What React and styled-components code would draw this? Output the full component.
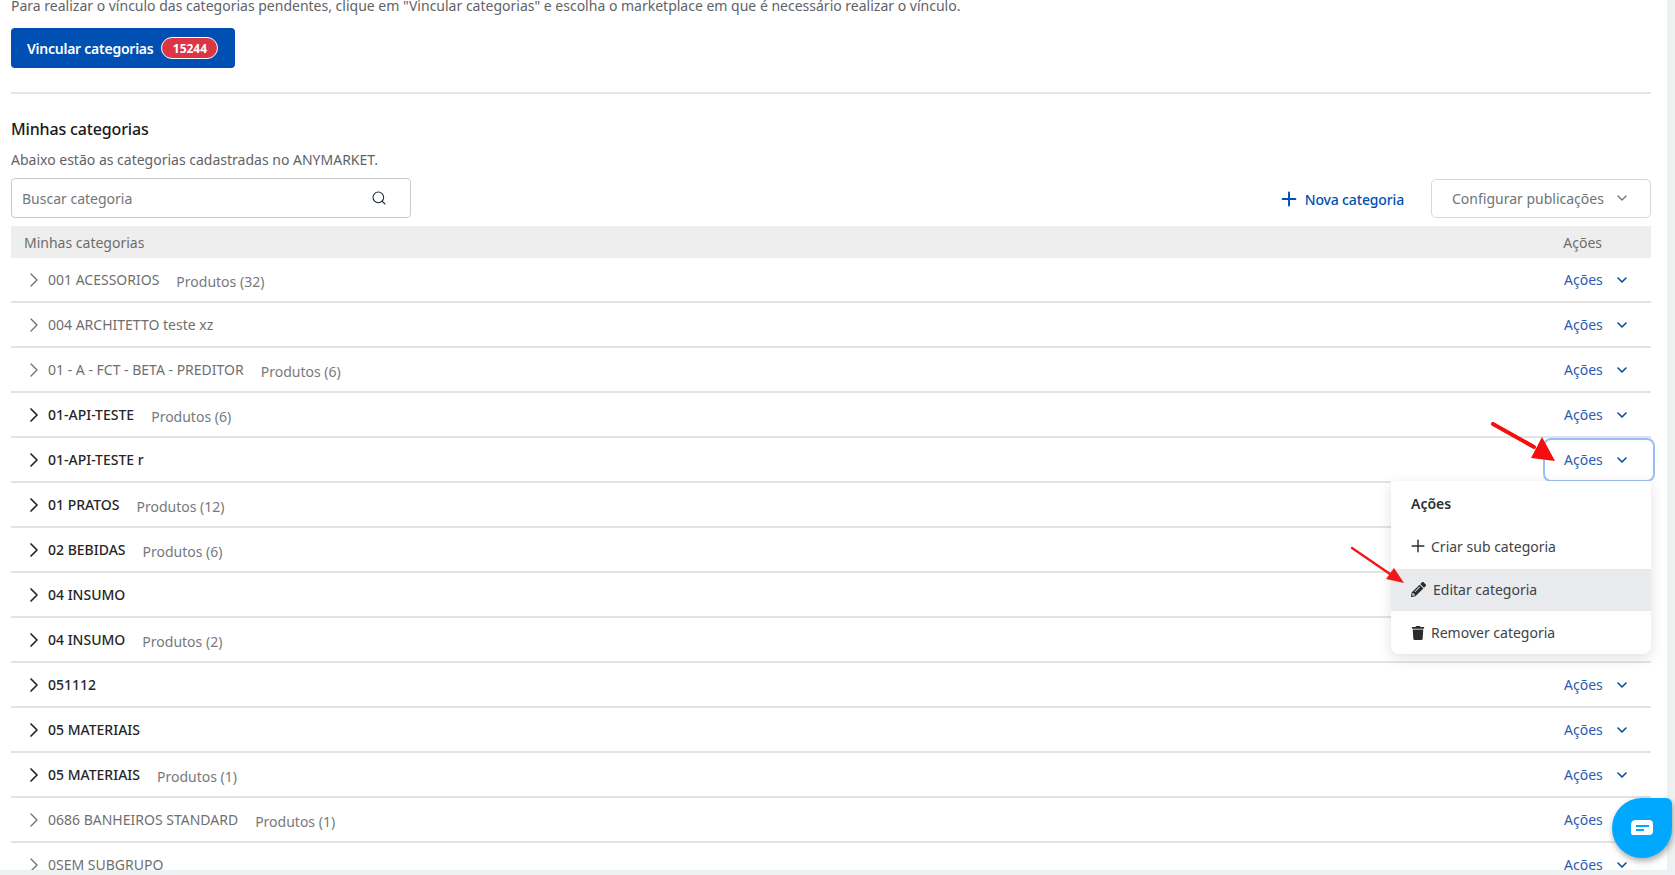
import React from 'react';
import styled, { createGlobalStyle } from 'styled-components';
import { ChevronDown, ChevronRight, Plus, Search } from 'lucide-react';
import { FaPencilAlt, FaTrash } from 'react-icons/fa';

const CATEGORIES = [
  { name: '001 ACESSORIOS', count: 32, muted: true },
  { name: '004 ARCHITETTO teste xz', muted: true },
  { name: '01 - A - FCT - BETA - PREDITOR', count: 6, muted: true },
  { name: '01-API-TESTE', count: 6 },
  { name: '01-API-TESTE r', focused: true },
  { name: '01 PRATOS', count: 12 },
  { name: '02 BEBIDAS', count: 6 },
  { name: '04 INSUMO' },
  { name: '04 INSUMO', count: 2 },
  { name: '051112' },
  { name: '05 MATERIAIS' },
  { name: '05 MATERIAIS', count: 1 },
  { name: '0686 BANHEIROS STANDARD', count: 1, muted: true },
  { name: '0SEM SUBGRUPO', muted: true },
];

const App = () => {
  return (
    <Viewport>
      <GlobalStyle />
      <Page>
        <Intro>
          Para realizar o vínculo das categorias pendentes, clique em "Vincular categorias" e escolha o marketplace em que é necessário realizar o vínculo.
        </Intro>
        <LinkButton>
          Vincular categorias
          <Badge>15244</Badge>
        </LinkButton>
        <Divider />
        <Heading>Minhas categorias</Heading>
        <Subtitle>Abaixo estão as categorias cadastradas no ANYMARKET.</Subtitle>
        <Toolbar>
          <SearchBox>
            <SearchText>Buscar categoria</SearchText>
            <Search size={16} strokeWidth={1.6} color="#1f2933" />
          </SearchBox>
          <ToolbarActions>
            <NewCategory>
              <Plus size={22} strokeWidth={2.1} />
              Nova categoria
            </NewCategory>
            <ConfigButton>
              Configurar publicações
              <ChevronDown size={16} strokeWidth={2} />
            </ConfigButton>
          </ToolbarActions>
        </Toolbar>
        <TableHead>
          <span>Minhas categorias</span>
          <span>Ações</span>
        </TableHead>
        <Table>
          {CATEGORIES.map((category, index) => (
            <Row key={index}>
              <RowLabel $muted={category.muted}>
                <ChevronRight size={24} strokeWidth={category.muted ? 1.3 : 1.7} />
                <Name>{category.name}</Name>
                {category.count && <Count>Produtos ({category.count})</Count>}
              </RowLabel>
              <ActionButton $focused={category.focused}>
                Ações
                <ChevronDown size={16} strokeWidth={2.4} />
              </ActionButton>
              {category.focused && (
                <Menu>
                  <MenuTitle>Ações</MenuTitle>
                  <MenuItem $spaced>
                    <MenuIcon $nudge={-3}>
                      <Plus size={20} strokeWidth={1.7} />
                    </MenuIcon>
                    Criar sub categoria
                  </MenuItem>
                  <MenuItem $active>
                    <MenuIcon>
                      <FaPencilAlt size={15} />
                    </MenuIcon>
                    <EditLabel>Editar categoria</EditLabel>
                  </MenuItem>
                  <MenuItem>
                    <MenuIcon>
                      <FaTrash size={14} />
                    </MenuIcon>
                    Remover categoria
                  </MenuItem>
                </Menu>
              )}
            </Row>
          ))}
        </Table>
        <BigArrow viewBox="0 0 70 44">
          <path d="M3 2 L44 25" stroke="#f40f0f" strokeWidth="4" strokeLinecap="round" />
          <path d="M65 39 L41 36 L52 15 Z" fill="#f40f0f" />
        </BigArrow>
        <SmallArrow viewBox="0 0 56 40">
          <path d="M2 2 L40 28" stroke="#f01818" strokeWidth="2.4" strokeLinecap="round" />
          <path d="M54 37 L36 33 L44 22 Z" fill="#f01818" />
        </SmallArrow>
      </Page>
      <ChatBubble>
        <svg width="24" height="18" viewBox="0 0 24 18">
          <path
            fillRule="evenodd"
            fill="#fff"
            d="M6 1 H19 Q23 1 23 5 V12 Q23 16 19 16 H3 Q1 16 1 14 V6 Q1 1 6 1 Z M6 6 V8 H19 V6 Z M6 10 V12 H14 V10 Z"
          />
        </svg>
      </ChatBubble>
    </Viewport>
  );
};

const GlobalStyle = createGlobalStyle`
  html, body {
    margin: 0;
    height: 100%;
    overflow: hidden;
    background: #eef1f2;
    font-family: "Noto Sans", sans-serif;
    font-size: 14px;
  }
`;

const Viewport = styled.div`
  position: relative;
  height: 875px;
  overflow: hidden;
`;

const Page = styled.main`
  position: relative;
  width: 1667px;
  height: 870px;
  box-sizing: border-box;
  padding: 0 16px 0 11px;
  background: #fff;
  overflow: hidden;
`;

const Intro = styled.p`
  margin: -4px 0 0;
  height: 20px;
  line-height: 20px;
  color: #5f6368;
  white-space: nowrap;
`;

const LinkButton = styled.button`
  display: flex;
  align-items: center;
  gap: 8px;
  width: 224px;
  height: 40px;
  margin-top: 12px;
  padding: 0 16px;
  border: 0;
  border-radius: 4px;
  background: #0050b3;
  color: #fff;
  font: 600 14px "Noto Sans", sans-serif;
  letter-spacing: -0.25px;
  white-space: nowrap;
`;

const Badge = styled.span`
  display: flex;
  align-items: center;
  justify-content: center;
  width: 57px;
  height: 22px;
  box-sizing: border-box;
  border: 1px solid #fff;
  border-radius: 11px;
  background: #dc3545;
  font-size: 12px;
  font-weight: 700;
  letter-spacing: 0;
`;

const Divider = styled.hr`
  height: 2px;
  margin: 24px 0 0;
  border: 0;
  background: #e3e5e6;
`;

const Heading = styled.h2`
  margin: 23px 0 0;
  height: 24px;
  line-height: 24px;
  color: #1a1a1a;
  font-size: 16px;
  font-weight: 500;
  letter-spacing: -0.15px;
`;

const Subtitle = styled.p`
  margin: 9px 0 0;
  height: 20px;
  line-height: 20px;
  color: #5f6368;
`;

const Toolbar = styled.div`
  display: flex;
  align-items: center;
  justify-content: space-between;
  margin-top: 8px;
`;

const SearchBox = styled.div`
  display: flex;
  align-items: center;
  justify-content: space-between;
  width: 400px;
  height: 40px;
  box-sizing: border-box;
  padding: 0 23px 0 10px;
  border: 1px solid #c9cccf;
  border-radius: 4px;
`;

const SearchText = styled.span`
  color: #72767a;
`;

const ToolbarActions = styled.div`
  display: flex;
  align-items: center;
  gap: 27px;
`;

const NewCategory = styled.button`
  display: flex;
  align-items: center;
  gap: 5px;
  margin-top: 2px;
  padding: 0;
  border: 0;
  background: none;
  color: #0050b3;
  font: 500 14px "Noto Sans", sans-serif;
  letter-spacing: -0.15px;
`;

const ConfigButton = styled.button`
  display: flex;
  align-items: center;
  justify-content: space-between;
  width: 220px;
  height: 39px;
  box-sizing: border-box;
  padding: 0 20px 0 20px;
  border: 1px solid #d6d9db;
  border-radius: 5px;
  background: #fff;
  color: #6f7478;
  font: 14px "Noto Sans", sans-serif;
`;

const TableHead = styled.div`
  display: flex;
  align-items: center;
  justify-content: space-between;
  height: 32px;
  margin-top: 8px;
  padding: 0 49px 0 13px;
  background: #eeeeee;
  color: #6d6d6d;
`;

const Table = styled.div`
  display: flex;
  flex-direction: column;
`;

const Row = styled.div`
  position: relative;
  display: flex;
  flex: none;
  align-items: center;
  justify-content: space-between;
  height: 45px;
  box-sizing: border-box;
  padding-left: 11px;
  border-bottom: 2px solid #e3e3e3;
`;

const RowLabel = styled.div`
  display: flex;
  align-items: center;
  padding-top: 2px;
  color: ${(p) => (p.$muted ? '#6f6f6f' : '#262626')};
  font-weight: ${(p) => (p.$muted ? 400 : 500)};

  svg {
    margin-top: -2px;
  }
`;

const Name = styled.span`
  margin: -2px 17px 0 2px;
`;

const Count = styled.span`
  margin-top: 2px;
  color: #77797c;
  font-weight: 400;
`;

const ActionButton = styled.button`
  display: flex;
  flex: none;
  align-items: center;
  gap: 11px;
  width: 112px;
  height: 44px;
  box-sizing: border-box;
  margin-right: -4px;
  padding: 0 0 0 19px;
  border: 2px solid ${(p) => (p.$focused ? '#9cbdf5' : 'transparent')};
  border-radius: 8px;
  background: none;
  color: #2a5db0;
  font: 14px "Noto Sans", sans-serif;

  svg {
    color: #0b4a9e;
  }
`;

const Menu = styled.div`
  position: absolute;
  z-index: 2;
  top: 43px;
  right: 0;
  display: flex;
  flex-direction: column;
  width: 260px;
  height: 173px;
  box-sizing: border-box;
  padding-top: 1px;
  border-radius: 0 0 8px 8px;
  background: #fff;
  box-shadow: 0 4px 14px rgba(0, 0, 0, 0.12);
`;

const MenuTitle = styled.div`
  display: flex;
  align-items: center;
  height: 43px;
  padding-left: 20px;
  color: #2b2f33;
  font-weight: 600;
`;

const MenuItem = styled.div`
  display: flex;
  align-items: center;
  height: 43px;
  margin-bottom: ${(p) => (p.$spaced ? '1px' : '0')};
  padding-left: 20px;
  background: ${(p) => (p.$active ? '#e8eaed' : 'transparent')};
  color: #3f4347;
`;

const MenuIcon = styled.span`
  display: flex;
  flex: none;
  align-items: center;
  width: 20px;
  color: #2b2b2b;

  svg {
    flex: none;
    margin-left: ${(p) => p.$nudge || 0}px;
  }
`;

const EditLabel = styled.span`
  margin-left: 2px;
`;

const BigArrow = styled.svg`
  position: absolute;
  z-index: 3;
  left: 1490px;
  top: 422px;
  width: 70px;
  height: 44px;
`;

const SmallArrow = styled.svg`
  position: absolute;
  z-index: 3;
  left: 1350px;
  top: 546px;
  width: 56px;
  height: 40px;
`;

const ChatBubble = styled.div`
  position: absolute;
  z-index: 4;
  left: 1612px;
  top: 798px;
  display: flex;
  align-items: center;
  justify-content: center;
  width: 60px;
  height: 60px;
  border-radius: 30px 6px 30px 30px;
  background: #00a8ff;
  box-shadow: 1px 3px 6px rgba(0, 0, 0, 0.35);
`;

export default App;
